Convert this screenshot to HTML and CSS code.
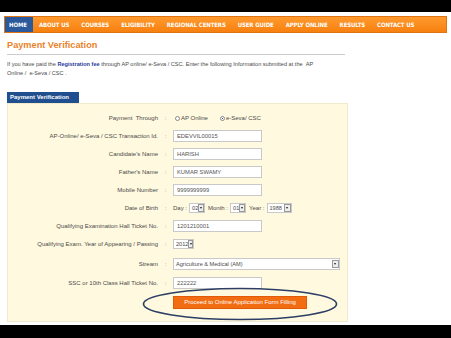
FILE: index.html
```html
<!DOCTYPE html>
<html>
<head>
<meta charset="utf-8">
<link rel="stylesheet" href="styles.css">
</head>
<body>
<div class="page">
  <div class="band"></div>
  <div class="main">
    <nav class="nav">
      <span class="nav-item active">HOME</span>
      <span class="nav-item">ABOUT US</span>
      <span class="nav-item">COURSES</span>
      <span class="nav-item">ELIGIBILITY</span>
      <span class="nav-item">REGIONAL CENTERS</span>
      <span class="nav-item">USER GUIDE</span>
      <span class="nav-item">APPLY ONLINE</span>
      <span class="nav-item">RESULTS</span>
      <span class="nav-item">CONTACT US</span>
    </nav>
    <h1 class="title">Payment Verification</h1>
    <div class="rule"></div>
    <p class="intro">If you have paid the <b>Registration fee</b> through AP online/ e-Seva / CSC. Enter the following Information submitted at the &nbsp;AP<br>Online / &nbsp;e-Seva / CSC .</p>
    <div class="tab">Payment Verification</div>
    <div class="panel">
      <div class="row">
        <span class="label">Payment &nbsp;Through</span><span class="colon">:</span>
        <span class="field radios">
          <span class="radio"></span><span class="rlabel">AP Online</span>
          <span class="radio on"></span><span>e-Seva/ CSC</span>
        </span>
      </div>
      <div class="row">
        <span class="label">AP-Online/ e-Seva / CSC Transaction Id.</span><span class="colon">:</span>
        <span class="field"><span class="input">EDEVVIL00015</span></span>
      </div>
      <div class="row">
        <span class="label">Candidate's Name</span><span class="colon">:</span>
        <span class="field"><span class="input">HARISH</span></span>
      </div>
      <div class="row">
        <span class="label">Father's Name</span><span class="colon">:</span>
        <span class="field"><span class="input">KUMAR SWAMY</span></span>
      </div>
      <div class="row">
        <span class="label">Mobile Number</span><span class="colon">:</span>
        <span class="field"><span class="input">9999999999</span></span>
      </div>
      <div class="row">
        <span class="label">Date of Birth</span><span class="colon">:</span>
        <span class="field dob">
          <span>Day :</span><span class="select w-sm"><span class="sv">02</span><span class="arrow"></span></span>
          <span>Month :</span><span class="select w-sm"><span class="sv">01</span><span class="arrow"></span></span>
          <span>Year :</span><span class="select w-md"><span class="sv">1988</span><span class="arrow"></span></span>
        </span>
      </div>
      <div class="row">
        <span class="label">Qualifying Examination Hall Ticket No.</span><span class="colon">:</span>
        <span class="field"><span class="input">1201210001</span></span>
      </div>
      <div class="row">
        <span class="label">Qualifying Exam. Year of Appearing / Passing</span><span class="colon">:</span>
        <span class="field"><span class="select w-yr"><span class="sv">2012</span><span class="arrow"></span></span></span>
      </div>
      <div class="row row-stream">
        <span class="label">Stream</span><span class="colon">:</span>
        <span class="field"><span class="select w-lg"><span class="sv">Agriculture &amp; Medical (AM)</span><span class="arrow"></span></span></span>
      </div>
      <div class="row">
        <span class="label">SSC or 10th Class Hall Ticket No.</span><span class="colon">:</span>
        <span class="field"><span class="input">222222</span></span>
      </div>
      <div class="row row-btn">
        <span class="label"></span><span class="colon"></span>
        <span class="field"><span class="button">Proceed to Online Application Form Filling</span></span>
      </div>
      <svg class="circle" width="200" height="36" viewBox="0 0 200 36"><ellipse cx="99" cy="18" rx="96.5" ry="15.5" fill="none" stroke="#2b3f66" stroke-width="1.6"/></svg>
    </div>
  </div>
  <div class="band bottom"></div>
</div>
</body>
</html>
```

FILE: styles.css
```css
html, body { margin: 0; padding: 0; background: #fff; }
body { font-family: "Liberation Sans", Arial, sans-serif; color: #555; }
.page { width: 451px; height: 338px; display: flex; flex-direction: column; overflow: hidden; }
.band { height: 12px; background: #000; flex: none; }
.band.bottom { height: 13px; }
.main { flex: 1; position: relative; overflow: hidden; }

.nav {
  margin: 4px 4px 0 4px;
  height: 17px;
  background: linear-gradient(#ff9a2e, #f7800f);
  border: 1px solid #e07414;
  box-sizing: border-box;
  display: flex;
  align-items: stretch;
}
.nav-item {
  color: #fff;
  font-weight: bold;
  font-size: 6px;
  font-family: "DejaVu Sans Condensed", "Liberation Sans Narrow", sans-serif;
  display: flex;
  align-items: center;
  padding: 0 6px;
  letter-spacing: -0.1px;
}
.nav-item.active { background: #2b5a9c; padding: 0 6px 0 4px; width: 28px; box-sizing: border-box; }

.title {
  margin: 6px 0 0 7px;
  font-size: 9.2px;
  font-weight: bold;
  color: #e8832c;
  line-height: 12px;
}
.rule { margin: 3px 0 0 7px; width: 338px; height: 1px; background: #ccc; }
.intro {
  margin: 5px 0 0 7px;
  width: 340px;
  font-size: 5.6px;
  line-height: 9px;
  color: #4a4a4a;
}
.intro b { color: #2a3a9a; }

.tab {
  margin: 14px 0 0 7px;
  width: 72px;
  height: 11px;
  background: #1f4f8e;
  color: #fff;
  font-size: 6px;
  font-weight: bold;
  line-height: 11px;
  padding-left: 3px;
  box-sizing: border-box;
}
.panel {
  margin-left: 7px;
  width: 341px;
  height: 219px;
  background: #fff9df;
  border: 1px solid #f0e9cc;
  box-sizing: border-box;
  position: relative;
  padding-top: 5px;
}
.row {
  display: grid;
  grid-template-columns: 150px 15px 1fr;
  height: 18px;
  align-items: center;
  font-size: 6px;
  color: #4a4a4a;
}
.row-stream { height: 21px; }
.row-btn { height: 20px; }
.label { text-align: right; white-space: nowrap; }
.colon { text-align: center; color: #888; }
.field { display: flex; align-items: center; white-space: nowrap; }
.input {
  width: 89px;
  height: 12px;
  box-sizing: border-box;
  background: #fff;
  border: 1px solid #c9c9c9;
  font-size: 5.8px;
  line-height: 10px;
  padding-left: 3px;
  color: #555;
}
.radios { gap: 1px; }
.radio {
  width: 5px; height: 5px; border-radius: 50%;
  border: 1px solid #888; background: #fff; box-sizing: border-box; margin-left: 2px;
}
.radio.on { background: radial-gradient(#2b4f80 40%, #fff 45%); }
.rlabel { margin-right: 9px; }
.dob { gap: 2px; }
.select {
  height: 10px;
  box-sizing: border-box;
  background: #fff;
  border: 1px solid #c9c9c9;
  display: flex;
  align-items: center;
  justify-content: space-between;
  font-size: 5.6px;
  padding-left: 2px;
  margin-right: 1px;
}
.w-sm { width: 16px; }
.w-md { width: 25px; }
.w-yr { width: 21px; }
.w-lg { width: 167px; height: 12px; }
.arrow {
  width: 7px; height: 8px; box-sizing: border-box;
  border: 1px solid #999; background: #eee; position: relative;
}
.arrow::after {
  content: ""; position: absolute; left: 1px; top: 2px;
  border-left: 1.5px solid transparent; border-right: 1.5px solid transparent; border-top: 2px solid #222;
}
.button {
  width: 134px;
  height: 13px;
  background: #f26c12;
  border: 1px solid #e25a05;
  box-sizing: border-box;
  color: #fff;
  font-size: 6px;
  display: flex; align-items: center; justify-content: center;
}
.circle { position: absolute; left: 133px; top: 182px; }
```
